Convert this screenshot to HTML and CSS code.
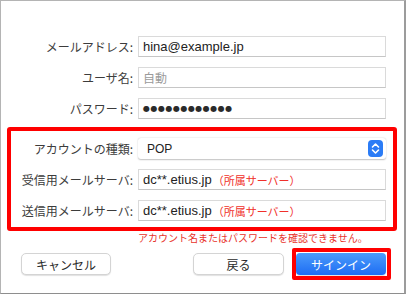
FILE: index.html
```html
<!DOCTYPE html>
<html lang="ja">
<head>
  <meta charset="UTF-8"/>
  <title>アカウント設定</title>
  <link rel="stylesheet" href="styles.css">
</head>
<body>

<div class="window">

  <div class="form">
    <div class="group">
      <div class="row">
        <div class="label">メールアドレス:</div>
        <div class="field">hina@example.jp</div>
      </div>
      <div class="row">
        <div class="label">ユーザ名:</div>
        <div class="field placeholder">自動</div>
      </div>
      <div class="row">
        <div class="label">パスワード:</div>
        <div class="field dots">●●●●●●●●●●●●</div>
      </div>
    </div>

    <!-- highlighted settings -->
    <div class="highlight">
      <div class="row">
        <div class="label">アカウントの種類:</div>
        <div class="field select">
          <span>POP</span>
          <span class="stepper">
            <svg width="15" height="17" viewBox="0 0 15 17">
              <rect width="15" height="17" rx="4" fill="#2b7cf6"/>
              <path d="M4.5 7 L7.5 4 L10.5 7 M4.5 10 L7.5 13 L10.5 10" fill="none" stroke="#fff" stroke-width="1.6" stroke-linecap="round" stroke-linejoin="round"/>
            </svg>
          </span>
        </div>
      </div>
      <div class="row">
        <div class="label">受信用メールサーバ:</div>
        <div class="field">dc**.etius.jp<span class="note">（所属サーバー）</span></div>
      </div>
      <div class="row">
        <div class="label">送信用メールサーバ:</div>
        <div class="field">dc**.etius.jp<span class="note">（所属サーバー）</span></div>
      </div>
    </div>

    <div class="error">アカウント名またはパスワードを確認できません。</div>
  </div>

  <div class="buttons">
    <button class="btn">キャンセル</button>
    <button class="btn back">戻る</button>
    <div class="mark">
      <button class="btn primary">サインイン</button>
    </div>
  </div>

</div>

</body>
</html>
```

FILE: styles.css
```css
* {
  box-sizing: border-box;
}

body {
  margin: 0;
  background: #fff;
  font-family: "Noto Sans CJK JP", "Liberation Sans", sans-serif;
  color: #333;
}

.window {
  width: 406px;
  height: 294px;
  background: #fff;
  border: 1px solid #b4b4b4;
  border-right: 2px solid #9c9c9c;
  border-bottom: 1px solid #8e8e8e;
}

.form {
  padding: 35px 0 0 6px;
}

.group {
  display: flex;
  flex-direction: column;
  gap: 10px;
  padding-left: 4px;
}

.row {
  display: flex;
  align-items: center;
  height: 21px;
}

.label {
  width: 122px;
  margin-right: 5px;
  text-align: right;
  font-size: 12px;
  color: #3c3c3c;
  white-space: nowrap;
}

.field {
  width: 248px;
  height: 21px;
  padding-left: 4px;
  display: flex;
  align-items: center;
  border: 1px solid #dadada;
  border-bottom-color: #c6c6c6;
  background: #fff;
  font-family: "Liberation Sans", "Noto Sans CJK JP", sans-serif;
  font-size: 13px;
  color: #222;
  white-space: nowrap;
}

.placeholder {
  font-family: "Noto Sans CJK JP", sans-serif;
  font-size: 12px;
  color: #9a9a9a;
}

.dots {
  font-family: "DejaVu Sans", sans-serif;
  font-size: 8px;
  letter-spacing: 0.5px;
  color: #2a2a2a;
}

.note {
  font-family: "Noto Sans CJK JP", sans-serif;
  font-size: 11px;
  color: #f0302a;
  margin-left: 1px;
}

.highlight {
  width: 390px;
  margin-top: 8px;
  padding: 7px 0 6px 0;
  border: 4px solid #f00;
  border-radius: 3px;
  display: flex;
  flex-direction: column;
  gap: 10px;
}

.select {
  border: none;
  padding-left: 9px;
  padding-right: 3px;
  justify-content: space-between;
  font-size: 12px;
  box-shadow: 0 0.5px 1.5px rgba(0, 0, 0, 0.25);
  border-radius: 3px;
}

.stepper {
  display: flex;
}

.error {
  margin-top: 1px;
  padding-left: 131px;
  font-size: 10px;
  line-height: 12px;
  color: #e8332b;
  white-space: nowrap;
}

.buttons {
  display: flex;
  align-items: center;
  margin-top: 4px;
  padding: 0 13px 0 20px;
}

.btn {
  width: 90px;
  height: 22px;
  padding: 0;
  border: 1px solid #d4d4d4;
  border-radius: 5px;
  background: #fff;
  box-shadow: 0 1px 1px rgba(0, 0, 0, 0.12);
  font-family: "Noto Sans CJK JP", sans-serif;
  font-size: 12px;
  color: #2a2a2a;
}

.back {
  width: 91px;
  margin-left: auto;
}

.mark {
  display: flex;
  margin-left: 8px;
  padding: 1px 1px 1px 0;
  border: 4px solid #f00;
  border-radius: 2px;
}

.primary {
  display: block;
  border: none;
  border-radius: 4px;
  background: linear-gradient(#4c9cfb, #1d6cf3);
  color: #fff;
}
```
